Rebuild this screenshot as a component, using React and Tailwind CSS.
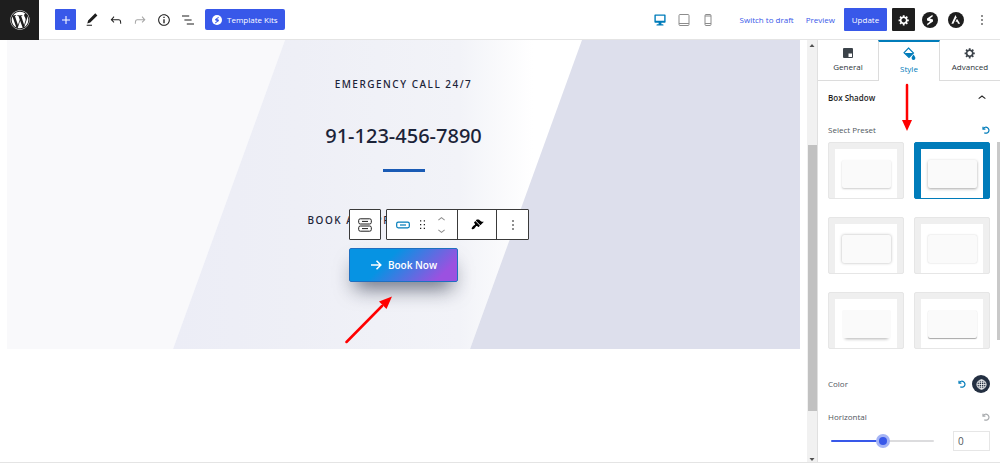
import { FaWordpress } from "react-icons/fa";

const icons = {
  plus: "M18 11.2h-5.2V6h-1.6v5.2H6v1.6h5.2V18h1.6v-5.2H18z",
  pencil: "M20.1 5.1L16.9 2 6.2 12.7l-1.3 4.4 4.5-1.3L20.1 5.1zM4 20.8h8v-1.5H4v1.5z",
  undo: "M18.3 11.7c-.6-.6-1.4-.9-2.3-.9H6.7l2.9-3.3-1.1-1-4.5 5L8.5 16l1-1-2.7-2.7H16c.5 0 .9.2 1.3.5 1 1 1 3.4 1 4.5v.3h1.5v-.2c0-1.5 0-4.3-1.5-5.7z",
  redo: "M15.6 6.5l-1.1 1 2.9 3.3H8c-.9 0-1.7.3-2.3.9-1.4 1.5-1.4 4.2-1.4 5.6v.2h1.5v-.3c0-1.1 0-3.5 1-4.5.3-.3.7-.5 1.3-.5h9.2L14.5 15l1.1 1.1 4.6-4.6-4.6-5z",
  info: "M12 3.2c-4.8 0-8.8 3.9-8.8 8.8 0 4.8 3.9 8.8 8.8 8.8 4.8 0 8.8-3.9 8.8-8.8 0-4.8-4-8.8-8.8-8.8zm0 16c-4 0-7.2-3.3-7.2-7.2C4.8 8 8 4.8 12 4.8s7.2 3.3 7.2 7.2c0 4-3.2 7.2-7.2 7.2zM11 17h2v-6h-2v6zm0-8h2V7h-2v2z",
  list: "M13.8 5.2H3v1.5h10.8V5.2zm-3.6 12v1.5H21v-1.5H10.2zm7.2-6H6.6v1.5h10.8v-1.5z",
  more: "M13 19h-2v-2h2v2zm0-6h-2v-2h2v2zm0-6h-2V5h2v2z",
  drag: "M8 7h2V5H8v2zm0 6h2v-2H8v2zm0 6h2v-2H8v2zm6-14v2h2V5h-2zm0 8h2v-2h-2v2zm0 6h2v-2h-2v2z",
  up: "M6.5 12.4L12 8l5.5 4.4-.9 1.2L12 10l-4.5 3.6-1-1.2z",
  down: "M17.5 11.6L12 16l-5.5-4.4.9-1.2L12 14l4.5-3.6 1 1.2z",
  brush: "M14.48 11.06L7.41 3.99l1.5-1.5c.5-.56 2.3-.47 3.51.32 1.21.8 1.43 1.28 2.91 2.1 1.18.64 2.45 1.26 4.45.85zm-.71.71L6.7 4.7 4.93 6.47c-.39.39-.39 1.02 0 1.41l1.06 1.06c.39.39.39 1.03 0 1.42-.6.6-1.43 1.11-2.21 1.69-.35.26-.7.53-1.01.84C1.43 14.23.4 16.08 1.4 17.07c.99 1 2.84-.03 4.18-1.36.31-.31.58-.66.85-1.02.57-.78 1.08-1.61 1.69-2.21.39-.39 1.02-.39 1.41 0l1.06 1.06c.39.39 1.02.39 1.41 0z",
  desktop: "M3 2h14c.55 0 1 .45 1 1v10c0 .55-.45 1-1 1h-5v2h2c.55 0 1 .45 1 1v1H5v-1c0-.55.45-1 1-1h2v-2H3c-.55 0-1-.45-1-1V3c0-.55.45-1 1-1zm13 9V4H4v7h12z",
  gear: "M18 12h-2.18c-.17.7-.44 1.35-.81 1.93l1.54 1.54-2.1 2.1-1.54-1.54c-.58.36-1.23.63-1.91.79V19H8v-2.18c-.68-.16-1.33-.43-1.91-.79l-1.54 1.54-2.12-2.12 1.54-1.54c-.36-.58-.63-1.23-.79-1.91H1V9.03h2.17c.16-.7.44-1.35.8-1.94L2.43 5.55l2.1-2.1 1.54 1.54c.58-.37 1.24-.64 1.93-.81V2h3v2.18c.68.16 1.33.43 1.91.79l1.54-1.54 2.12 2.12-1.54 1.54c.36.59.64 1.24.8 1.94H18V12zm-8.5 2.2c2 0 3.7-1.7 3.7-3.7s-1.7-3.7-3.7-3.7-3.7 1.7-3.7 3.7 1.7 3.7 3.7 3.7z",
};

function Icon({ name, box = 24, className = "size-4" }) {
  return (
    <svg viewBox={`0 0 ${box} ${box}`} fill="currentColor" className={`shrink-0 ${className}`} aria-hidden="true">
      <path d={icons[name]} fillRule="evenodd" />
    </svg>
  );
}

function IconButton({ label, className = "", children }) {
  return (
    <button type="button" aria-label={label} className={`flex shrink-0 items-center justify-center ${className}`}>
      {children}
    </button>
  );
}

function Spark({ className, disc, bolt }) {
  return (
    <svg viewBox="0 0 16 16" className={`shrink-0 ${className}`} aria-hidden="true">
      <circle cx="8" cy="8" r="8" fill={disc} />
      <path d="M10.6 2.8 5 6.6v1.9l3.1.9-2.9 2.3v1.9l5.8-4.2V7.500L7.900 6.500l2.700-1.900z" fill={bolt} />
    </svg>
  );
}

function AstraLogo() {
  return (
    <svg viewBox="0 0 16 16" className="size-4 shrink-0" aria-hidden="true">
      <circle cx="8" cy="8" r="8" fill="#1e1e1e" />
      <path d="M7.500 3 3.400 11.700h2L8.500 5.200z" fill="#fff" />
      <path d="m9 6.800-1.500 3h1.700l.8 1.900h2.100z" fill="#fff" />
    </svg>
  );
}

function TopBar() {
  return (
    <header className="flex h-10 shrink-0 items-center border-b border-[#e4e4e4] bg-white">
      <a href="#dashboard" aria-label="WordPress" className="mr-4 flex h-10 w-[39px] shrink-0 items-center justify-center bg-[#1e1e1e] text-white">
        <FaWordpress className="size-5" />
      </a>
      <IconButton label="Add block" className="size-[21px] rounded-[1px] bg-[#3858e9] text-white">
        <Icon name="plus" />
      </IconButton>
      <div className="ml-2 flex items-center gap-2 text-[#1e1e1e]">
        <IconButton label="Tools" className="size-4"><Icon name="pencil" /></IconButton>
        <IconButton label="Undo" className="size-4"><Icon name="undo" /></IconButton>
        <IconButton label="Redo" className="size-4 text-[#a5a5a5]"><Icon name="redo" /></IconButton>
        <IconButton label="Details" className="size-4"><Icon name="info" /></IconButton>
        <IconButton label="List view" className="size-4"><Icon name="list" /></IconButton>
      </div>
      <button type="button" className="ml-[9px] flex h-[21px] shrink-0 items-center gap-[5px] rounded-[2px] bg-[#3858e9] px-[7px] text-[8px] whitespace-nowrap text-white">
        <Spark className="size-[10px]" disc="#fff" bolt="#3858e9" />
        Template Kits
      </button>

      <div className="ml-auto flex items-center">
        <div className="flex items-center gap-3">
          <IconButton label="Desktop" className="size-3 text-[#007cba]"><Icon name="desktop" box={20} className="size-[14px]" /></IconButton>
          <IconButton label="Tablet" className="size-3">
            <svg viewBox="0 0 12 12" className="size-3" fill="none" stroke="#8c8c8c">
              <rect x="1" y=".5" width="10" height="11" rx="1" />
              <path d="M1 9.500h10" />
            </svg>
          </IconButton>
          <IconButton label="Mobile" className="size-3">
            <svg viewBox="0 0 12 12" className="size-3" fill="none" stroke="#8c8c8c">
              <rect x="3" y=".5" width="6" height="11" rx="1" />
              <path d="M3 2h6M3 9.500h6" />
            </svg>
          </IconButton>
        </div>
        <button type="button" className="ml-[26px] text-[8px] whitespace-nowrap text-[#3858e9]">Switch to draft</button>
        <button type="button" className="ml-3 text-[8px] text-[#3858e9]">Preview</button>
        <button type="button" className="ml-[9px] h-[23px] w-[43px] rounded-[1px] bg-[#3858e9] text-[8px] font-medium text-white">Update</button>
        <IconButton label="Settings" className="ml-[5px] size-[23px] rounded-[1px] bg-[#1e1e1e] text-white"><Icon name="gear" box={20} className="size-3" /></IconButton>
        <IconButton label="Spectra" className="ml-[7px] size-4"><Spark className="size-4" disc="#1e1e1e" bolt="#fff" /></IconButton>
        <IconButton label="Astra" className="ml-[10px] size-4"><AstraLogo /></IconButton>
        <IconButton label="Options" className="mr-[10px] ml-[10px] size-4 text-[#1e1e1e]"><Icon name="more" /></IconButton>
      </div>
    </header>
  );
}

function BlockToolbar() {
  return (
    <div className="absolute bottom-full left-0 mb-2 flex gap-[5px] text-[#1e1e1e]" role="toolbar" aria-label="Block tools">
      <IconButton label="Select Buttons" className="h-[31px] w-8 rounded-[1px] border border-[#3a3a3a] bg-white">
        <svg viewBox="0 0 14 14" className="size-[14px]" fill="none" stroke="currentColor" aria-hidden="true">
          <rect x=".7" y=".8" width="12.600" height="5.200" rx="1.600" />
          <rect x=".7" y="8" width="12.600" height="5.200" rx="1.600" />
          <path d="M4 3.400h6M4 10.600h6" />
        </svg>
      </IconButton>
      <div className="flex h-[31px] divide-x divide-[#3a3a3a] rounded-[1px] border border-[#3a3a3a] bg-white">
        <div className="flex w-[71px] items-center justify-between pr-2 pl-[9px]">
          <IconButton label="Button" className="text-[#007cba]">
            <svg viewBox="0 0 14 14" className="size-[14px]" fill="none" stroke="currentColor" strokeWidth="1.200" aria-hidden="true">
              <rect x=".7" y="4.200" width="12.600" height="5.600" rx="1.500" />
              <path d="M4 7h6" />
            </svg>
          </IconButton>
          <IconButton label="Drag"><Icon name="drag" className="size-[15px]" /></IconButton>
          <div className="flex flex-col text-[#8c8c8c]">
            <IconButton label="Move up" className="h-[11px]"><Icon name="up" className="size-[15px]" /></IconButton>
            <IconButton label="Move down" className="h-[11px]"><Icon name="down" className="size-[15px]" /></IconButton>
          </div>
        </div>
        <IconButton label="Copy and paste styles" className="w-[39px] text-black">
          <Icon name="brush" box={20} className="size-[13px]" />
        </IconButton>
        <IconButton label="More options" className="w-[31px]"><Icon name="more" /></IconButton>
      </div>
    </div>
  );
}

const eyebrow = "relative text-[10px] leading-4 font-medium tracking-[0.15em]";

function Canvas() {
  return (
    <main className="min-w-0 flex-1 overflow-hidden bg-white px-[7px]">
      <section className="relative flex flex-col items-center pb-[67px] font-['Noto_Sans','Open_Sans',sans-serif] text-[#1b2338]">
        <svg viewBox="0 0 793 309" preserveAspectRatio="none" className="absolute inset-0 size-full" aria-hidden="true">
          <defs>
            <linearGradient id="band" gradientUnits="userSpaceOnUse" x1="166" x2="575" y1="0" y2="0">
              <stop offset="0" stopColor="#ecedf6" />
              <stop offset=".3" stopColor="#eeeff6" />
              <stop offset=".7" stopColor="#f2f3f8" />
              <stop offset=".88" stopColor="#fff" />
            </linearGradient>
          </defs>
          <path d="M0 0h278L166 309H0z" fill="#f9f9fb" />
          <path d="M278 0h297L463 309H166z" fill="url(#band)" />
          <path d="M575 0h218v309H463z" fill="#dddfec" />
        </svg>
        <p className={`mt-9 ${eyebrow}`}>EMERGENCY CALL 24/7</p>
        <p className="relative mt-7 text-[20px] leading-8 font-medium">91-123-456-7890</p>
        <div className="relative mt-[17px] h-[3px] w-[42px] bg-[#1a5bb5]" />
        <p className={`mt-10 ${eyebrow}`}>BOOK AN APPOINTMENT TODAY</p>
        <div className="relative mt-5">
          <button type="button" className="flex h-[34px] w-[109px] items-center justify-center gap-[6px] rounded-[2px] border border-[#1f6fc0] bg-linear-[135deg,#0693e3_35%,#9b51e0_85%] font-['Open_Sans','Noto_Sans',sans-serif] text-[10px] font-semibold whitespace-nowrap text-white shadow-[0_12px_20px_-6px_rgba(20,28,50,0.65)]">
            <svg viewBox="0 0 12 12" className="size-3" fill="none" stroke="#fff" strokeWidth="1.500" aria-hidden="true">
              <path d="M1 6h9.500M6.500 1.800 10.800 6l-4.300 4.200" />
            </svg>
            Book Now
          </button>
          <BlockToolbar />
          <svg viewBox="0 0 50 50" className="absolute top-full -left-1 mt-[13px] size-[50px]" aria-hidden="true">
            <path d="M1.500 47 37 11" stroke="#f00" strokeWidth="2.500" strokeLinecap="round" />
            <path d="M47 1.500 41.500 14 34 6.500z" fill="#f00" />
          </svg>
        </div>
      </section>
    </main>
  );
}

function Scrollbar() {
  return (
    <div className="flex w-[10px] shrink-0 flex-col items-center bg-[#f1f1f1]" aria-hidden="true">
      <svg viewBox="0 0 10 10" className="size-[10px]" fill="#505050"><path d="M2.500 7 5 4l2.500 3z" /></svg>
      <div className="w-full flex-[95_1_0%]" />
      <div className="w-[9px] flex-[267_1_0%] bg-[#c1c1c1]" />
      <div className="w-full flex-[41_1_0%]" />
      <svg viewBox="0 0 10 10" className="size-[10px]" fill="#505050"><path d="M2.500 6 5 9l2.500-3z" /></svg>
    </div>
  );
}

function Reset({ label, className }) {
  return (
    <IconButton label={label} className={className}>
      <svg viewBox="0 0 8 8" className="size-2" fill="none" stroke="currentColor" strokeWidth="1.200">
        <path d="M1.400 2.600A3 3 0 1 1 2.300 6.700" />
        <path d="M1 .8v2.300h2.400" />
      </svg>
    </IconButton>
  );
}

const presets = [
  { name: "Preset 1", shadow: "shadow-[0_1px_2px_rgba(0,0,0,0.2)]" },
  { name: "Preset 2", shadow: "shadow-[0_1px_3px_rgba(0,0,0,0.35)]", active: true },
  { name: "Preset 3", shadow: "shadow-[0_0_3px_rgba(0,0,0,0.3)]" },
  { name: "Preset 4", shadow: "shadow-[0_0_2px_rgba(0,0,0,0.2)]" },
  { name: "Preset 5", shadow: "shadow-[0_4px_3px_-3px_rgba(0,0,0,0.3)]" },
  { name: "Preset 6", shadow: "shadow-[0_1px_1px_rgba(0,0,0,0.35)]" },
];

function Preset({ name, shadow, active }) {
  const frame = active ? "border-[#007cba] bg-[#007cba]" : "border-[#e6e6e6] bg-[#efefef]";
  return (
    <label className={`flex h-[57px] cursor-pointer rounded-[2px] border px-[6px] pt-[6px] ${frame}`}>
      <input type="radio" name="preset" defaultChecked={active} aria-label={name} className="sr-only" />
      <span className="flex flex-1 items-center justify-center bg-white">
        <span className={`h-7 w-[49px] rounded-[2px] bg-[#fafafa] ${shadow}`} />
      </span>
    </label>
  );
}

const tabBase = "flex h-[41px] flex-1 flex-col items-center text-[8px] leading-3";

function Sidebar() {
  return (
    <aside className="relative w-[183px] shrink-0 overflow-hidden border-l border-[#e0e0e0] bg-white text-[8px] text-[#50575e]">
      <div className="flex text-[#2c3338]" role="tablist">
        <button type="button" role="tab" className={`${tabBase} gap-[2px] border-b border-[#dcdcdc] pt-[7px]`}>
          <svg viewBox="0 0 12 12" className="size-3" aria-hidden="true">
            <rect x="1" y="1" width="10" height="10" rx="1" fill="#3c434a" />
            <rect x="6.500" y="6.500" width="3.500" height="3.500" fill="#fff" />
          </svg>
          General
        </button>
        <button type="button" role="tab" aria-selected="true" className={`${tabBase} gap-[3px] border-x border-t-2 border-x-[#dcdcdc] border-t-[#007cba] pt-[5px] text-[#007cba]`}>
          <svg viewBox="0 0 13 13" className="size-[13px]" aria-hidden="true">
            <path d="M5.500 1 10.500 6 6 10.500 1 5.800z" fill="none" stroke="#007cba" strokeWidth="1.100" />
            <path d="M1.500 6h9L6 10.500z" fill="#007cba" />
            <path d="M10.500 7.500c1 1.500 1.900 2.600 1.900 3.500a1.900 1.900 0 0 1-3.800 0c0-.9.900-2 1.900-3.500z" fill="#007cba" />
          </svg>
          Style
        </button>
        <button type="button" role="tab" className={`${tabBase} gap-[2px] border-b border-[#dcdcdc] pt-[7px]`}>
          <Icon name="gear" box={20} className="size-3 text-[#3c434a]" />
          Advanced
        </button>
      </div>

      <div className="px-[10px]">
        <button type="button" className="mt-[9px] flex w-full items-center justify-between font-semibold leading-3 text-[#1e1e1e]">
          Box Shadow
          <Icon name="up" />
        </button>
        <div className="mt-[18px] flex items-center justify-between leading-3">
          Select Preset
          <Reset label="Reset preset" className="text-[#007cba]" />
        </div>
        <div className="mt-[6px] grid grid-cols-2 gap-x-[10px] gap-y-[18px]">
          {presets.map((preset) => <Preset key={preset.name} {...preset} />)}
        </div>
        <div className="mt-[26px] flex h-[18px] items-center">
          Color
          <Reset label="Reset color" className="mr-[6px] ml-auto text-[#007cba]" />
          <IconButton label="Choose color" className="size-[18px] rounded-full bg-[#243042]">
            <svg viewBox="0 0 12 12" className="size-[11px]" fill="none" stroke="#fff">
              <circle cx="6" cy="6" r="5" />
              <path d="M1 6h10M6 1v10M1.800 3.500h8.400M1.800 8.500h8.400" strokeWidth=".8" />
              <ellipse cx="6" cy="6" rx="2.500" ry="5" strokeWidth=".8" />
            </svg>
          </IconButton>
        </div>
        <div className="mt-[18px] flex items-center justify-between leading-3">
          <label htmlFor="horizontal">Horizontal</label>
          <Reset label="Reset horizontal" className="text-[#a7aaad]" />
        </div>
        <div className="mt-2 flex items-center justify-between">
          <input
            id="horizontal"
            type="range"
            min="-100"
            max="100"
            defaultValue="0"
            className="ml-[3px] h-[14px] w-[103px] appearance-none bg-transparent [&::-webkit-slider-runnable-track]:h-[2px] [&::-webkit-slider-runnable-track]:rounded-full [&::-webkit-slider-runnable-track]:bg-linear-[90deg,#3858e9_50%,#dcdcde_50%] [&::-webkit-slider-thumb]:-mt-[3px] [&::-webkit-slider-thumb]:size-2 [&::-webkit-slider-thumb]:appearance-none [&::-webkit-slider-thumb]:rounded-full [&::-webkit-slider-thumb]:bg-[#3858e9] [&::-webkit-slider-thumb]:shadow-[0_0_0_3px_#a5b4f5]"
          />
          <input type="text" aria-label="Horizontal value" defaultValue="0" className="h-5 w-[37px] border border-[#e6e6e6] px-1 text-[10px] text-[#50575e]" />
        </div>
      </div>

      <div className="absolute top-[102px] right-0 h-[198px] w-[3px] bg-[#c9c9c9]" aria-hidden="true" />
      <svg viewBox="0 0 10 48" className="absolute top-[43px] left-[84px] h-12 w-[10px]" aria-hidden="true">
        <path d="M5 2v36" stroke="#f00" strokeWidth="2.500" strokeLinecap="round" />
        <path d="M0 37h10L5 48z" fill="#f00" />
      </svg>
    </aside>
  );
}

export default function App() {
  return (
    <div className="flex h-screen flex-col bg-white pb-px font-['Open_Sans','Noto_Sans',sans-serif]">
      <TopBar />
      <div className="flex min-h-0 flex-1 border-b border-[#e4e4e4]">
        <Canvas />
        <Scrollbar />
        <Sidebar />
      </div>
    </div>
  );
}
